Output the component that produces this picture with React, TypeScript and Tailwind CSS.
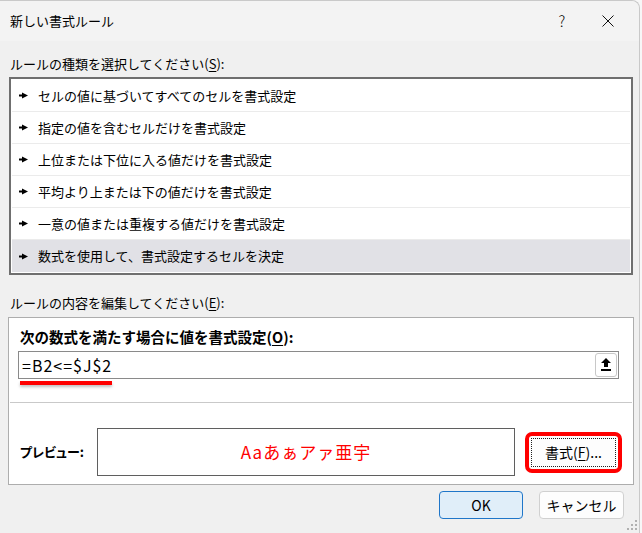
import React from 'react';

const rules = [
  'セルの値に基づいてすべてのセルを書式設定',
  '指定の値を含むセルだけを書式設定',
  '上位または下位に入る値だけを書式設定',
  '平均より上または下の値だけを書式設定',
  '一意の値または重複する値だけを書式設定',
  '数式を使用して、書式設定するセルを決定',
];

function Pointer() {
  return (
    <svg width="9" height="7" viewBox="0 0 9 7" className="shrink-0">
      <path d="M0 2.5h4v2H0z" fill="#000" />
      <path d="M3 0.5L9 3.5L3 6.5z" fill="#000" />
    </svg>
  );
}

function Key({ k }: { k: string }) {
  return (
    <>
      (<span className="underline underline-offset-2">{k}</span>)
    </>
  );
}

export default function App() {
  return (
    <div className="w-[642px] h-[533px] bg-[#f7f7f7] overflow-hidden font-['Noto_Sans_CJK_JP',sans-serif] text-[13px] text-[#000]">
      <div className="w-[640px] h-[533px] flex flex-col bg-[#f0f0f0] border-r border-t border-[#c9c9c9] rounded-tr-[8px]">
        {/* title bar */}
        <div className="h-[40px] shrink-0 flex items-center bg-[#f3f3f3] rounded-tr-[8px]">
          <span className="pl-[10px] leading-[20px]">新しい書式ルール</span>
          <div className="ml-auto mr-[8px] flex">
            <div className="w-[46px] h-[32px] flex items-center justify-center text-[15px] font-light">?</div>
            <div className="w-[46px] h-[32px] flex items-center justify-center">
              <svg width="12" height="12" viewBox="0 0 12 12">
                <path d="M0.5 0.5L11.5 11.5M11.5 0.5L0.5 11.5" stroke="#111" strokeWidth="1" />
              </svg>
            </div>
          </div>
        </div>

        {/* rule type */}
        <div className="pl-[10px] pt-[13px] leading-[20px]">
          ルールの種類を選択してください<Key k="S" />:
        </div>
        <div className="mt-[3px] ml-[9px] w-[624px] border-2 border-[#6f6f6f] bg-white p-[1px]">
          {rules.map((r, i) => (
            <div
              key={r}
              className={`h-[32px] flex items-center gap-[10px] pl-[7px] ${
                i === rules.length - 1 ? 'bg-[#e1e1e6]' : 'border-b border-[#ebebeb]'
              }`}
            >
              <Pointer />
              <span>{r}</span>
            </div>
          ))}
        </div>

        {/* rule description */}
        <div className="pl-[10px] mt-[18px] leading-[20px]">
          ルールの内容を編集してください<Key k="E" />:
        </div>
        <div className="mt-[4px] ml-[8px] w-[626px] h-[168px] border border-[#adadad] bg-white flex flex-col">
          <div className="pl-[11px] pt-[9px] leading-[20px] font-bold text-[14.5px]">
            次の数式を満たす場合に値を書式設定<Key k="O" />:
          </div>
          <div className="relative mt-[4px] ml-[9px] w-[601px] h-[28px] border border-[#8a8a8a] flex items-center">
            <span className="pl-[3px] text-[16px] tracking-[1px] leading-[20px]">=B2&lt;=$J$2</span>
            <div className="ml-auto mr-[1px] w-[22px] h-[24px] border border-[#c8c8c8] rounded-[3px] bg-white flex items-center justify-center">
              <svg width="10" height="14" viewBox="0 0 10 14">
                <path d="M5 0L10 5H7V9H3V5H0z" fill="#000" />
                <path d="M0 11h10v2H0z" fill="#000" />
              </svg>
            </div>
            <div className="absolute left-[1px] top-full mt-[3px] w-[92px] h-[4px] bg-[#ff0000] shadow-[0_2px_3px_rgba(0,0,0,0.25)]" />
          </div>
          <div className="mt-[23px] mx-[1px] h-px bg-[#c9c9c9]" />
          <div className="mt-[25px] flex items-center">
            <span className="pl-[11px] w-[88px] font-bold text-[13px] [font-feature-settings:'palt']">プレビュー:</span>
            <div className="w-[418px] h-[48px] border border-[#5f5f5f] flex items-center justify-center text-[17px] text-[#ff0000] tracking-[1px]">
              Aaあぁアァ亜宇
            </div>
            <div className="ml-[10px] w-[97px] h-[41px] border-[4px] border-[#ff0000] rounded-[7px] bg-[#fdfdfd] p-[2px]">
              <div className="h-full border border-dotted border-[#222] flex items-center justify-center text-[14px]">
                書式(<span className="underline underline-offset-2">F</span>)...
              </div>
            </div>
          </div>
        </div>

        {/* buttons */}
        <div className="relative flex-1 flex items-start justify-end pr-[15px] pt-[6px] gap-[16px]">
          <div className="w-[84px] h-[28px] border border-[#1f76c9] bg-[#e0eef9] rounded-[4px] flex items-center justify-center text-[14px]">
            OK
          </div>
          <div className="w-[85px] h-[28px] border border-[#d0d0d0] bg-[#fdfdfd] rounded-[4px] flex items-center justify-center text-[14px]">
            キャンセル
          </div>
          <svg width="10" height="10" viewBox="0 0 10 10" className="absolute right-[2px] bottom-[3px]">
            <rect x="8" y="0" width="2" height="2" fill="#b0b0b0" />
            <rect x="4" y="4" width="2" height="2" fill="#b0b0b0" />
            <rect x="8" y="4" width="2" height="2" fill="#b0b0b0" />
            <rect x="0" y="8" width="2" height="2" fill="#b0b0b0" />
            <rect x="4" y="8" width="2" height="2" fill="#b0b0b0" />
            <rect x="8" y="8" width="2" height="2" fill="#b0b0b0" />
          </svg>
        </div>
      </div>
    </div>
  );
}
